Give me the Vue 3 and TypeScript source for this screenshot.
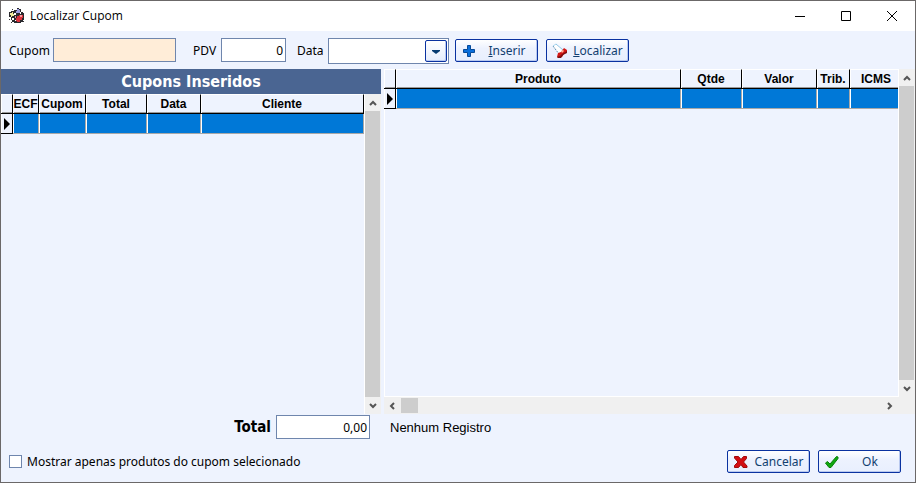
<script setup lang="ts">
import { ref } from 'vue'

interface Column {
  key: string
  label: string
}

const couponColumns: Column[] = [
  { key: 'ecf', label: 'ECF' },
  { key: 'cupom', label: 'Cupom' },
  { key: 'total', label: 'Total' },
  { key: 'data', label: 'Data' },
  { key: 'cliente', label: 'Cliente' },
]

const productColumns: Column[] = [
  { key: 'produto', label: 'Produto' },
  { key: 'qtde', label: 'Qtde' },
  { key: 'valor', label: 'Valor' },
  { key: 'trib', label: 'Trib.' },
  { key: 'icms', label: 'ICMS' },
]

const cupom = ref<string>('')
const pdv = ref<string>('0')
const date = ref<string>('')
const total = ref<string>('0,00')
const onlySelected = ref<boolean>(false)
</script>

<template>
  <div class="window">
    <header class="titlebar">
      <svg class="app-icon" viewBox="0 0 16 16" shape-rendering="crispEdges">
        <path d="M8 0h2v1h2v3h2v1h1v7h-1v2h-2v1H5v-1H3v-2H2V9H0V4h2V3h3V2h3z" fill="#2a2a2e" />
        <path d="M8 1h2v1h1v3H7V3h1z" fill="#9b9de0" />
        <path d="M1 5h2V4h1v2h1v2H3v1H2V7H1z" fill="#f1ec9b" />
        <path d="M5 5h2v2H5zM3 10h2v2H3zM11 4h1v2h-1zM6 12h1v1H6z" fill="#fff" />
        <path d="M8 8h2V7h4v3h-1v2h-2v2H8v-1H7v-3h1z" fill="#d9303b" />
        <path d="M11 7h2v2h-2zM6 8h1v2H6z" fill="#f59aa0" />
        <path d="M0 11h1v1H0zM2 14h1v1H2zM14 13h1v1h-1zM3 1h1v1H3z" fill="#333" />
      </svg>
      <h1>Localizar Cupom</h1>
      <div class="window-controls">
        <button type="button" aria-label="Minimizar">
          <svg viewBox="0 0 10 10"><path d="M0 5.5h10" /></svg>
        </button>
        <button type="button" aria-label="Maximizar">
          <svg viewBox="0 0 10 10"><path d="M.5.5h9v9h-9z" /></svg>
        </button>
        <button type="button" aria-label="Fechar">
          <svg viewBox="0 0 10 10"><path d="M0 0l10 10M10 0L0 10" /></svg>
        </button>
      </div>
    </header>

    <form class="toolbar" @submit.prevent>
      <label for="cupom">Cupom</label>
      <input id="cupom" v-model="cupom" class="field field-cupom" type="text" />
      <label for="pdv" class="label-pdv">PDV</label>
      <input id="pdv" v-model="pdv" class="field field-pdv" type="text" />
      <label for="data" class="label-data">Data</label>
      <div class="date-box">
        <input id="data" v-model="date" type="text" />
        <button type="button" class="date-open" aria-label="Abrir calendário">
          <svg viewBox="0 0 8 4"><path d="M0 0h8v1L4 4 0 1z" fill="#053a70" /></svg>
        </button>
      </div>
      <button type="button" class="action action-insert">
        <svg viewBox="0 0 16 16">
          <path d="M6.500 2.500h3v4h4v3h-4v4h-3v-4h-4v-3h4z" fill="#0a6fdc" stroke="#064a99" />
        </svg>
        <span><u>I</u>nserir</span>
      </button>
      <button type="button" class="action">
        <svg viewBox="0 0 16 16">
          <path d="M1 3l4-2 6 6-4 4z" fill="#fff" />
          <path d="M4 1l7 6" stroke="#8cc4e6" fill="none" />
          <path d="M1 3l6 8" stroke="#5b8fb0" fill="none" stroke-dasharray="2 1" />
          <path d="M1 3l3-2" stroke="#a9d6ee" fill="none" />
          <path d="M6 10l3-1 3-4 3 2v2l-3 2-2 3-3 1-2-1z" fill="#d31714" />
          <path d="M9 8l2-1 1 1-2 2z" fill="#ffb39a" />
          <path d="M15 8v2l-4 2-2 3H6l-1-1 3-1 2-2z" fill="#7d0f0f" />
        </svg>
        <span><u>L</u>ocalizar</span>
      </button>
    </form>

    <main class="panels">
      <section class="panel coupons">
        <h2>Cupons Inseridos</h2>
        <div class="grid">
          <div class="grid-body">
            <table>
              <colgroup>
                <col class="w-mark" />
                <col v-for="c in couponColumns" :key="c.key" :class="'w-' + c.key" />
              </colgroup>
              <thead>
                <tr>
                  <th></th>
                  <th v-for="c in couponColumns" :key="c.key" scope="col">{{ c.label }}</th>
                </tr>
              </thead>
              <tbody>
                <tr>
                  <td class="mark">
                    <svg viewBox="0 0 6 12"><path d="M0 0l6 6-6 6z" /></svg>
                  </td>
                  <td v-for="c in couponColumns" :key="c.key"></td>
                </tr>
              </tbody>
            </table>
          </div>
          <div class="scroll-v">
            <button type="button" aria-label="Rolar para cima">
              <svg viewBox="0 0 8 6"><path d="M1 5l3-3 3 3" /></svg>
            </button>
            <div class="thumb"></div>
            <button type="button" aria-label="Rolar para baixo">
              <svg viewBox="0 0 8 6"><path d="M1 1l3 3 3-3" /></svg>
            </button>
          </div>
        </div>
      </section>

      <section class="panel products">
        <div class="grid">
          <div class="grid-body framed">
            <table>
              <colgroup>
                <col class="w-mark" />
                <col v-for="c in productColumns" :key="c.key" :class="'w-' + c.key" />
              </colgroup>
              <thead>
                <tr>
                  <th></th>
                  <th v-for="c in productColumns" :key="c.key" scope="col">{{ c.label }}</th>
                </tr>
              </thead>
              <tbody>
                <tr>
                  <td class="mark">
                    <svg viewBox="0 0 6 12"><path d="M0 0l6 6-6 6z" /></svg>
                  </td>
                  <td v-for="c in productColumns" :key="c.key"></td>
                </tr>
              </tbody>
            </table>
          </div>
          <div class="scroll-v">
            <button type="button" aria-label="Rolar para cima">
              <svg viewBox="0 0 8 6"><path d="M1 5l3-3 3 3" /></svg>
            </button>
            <div class="thumb"></div>
            <button type="button" aria-label="Rolar para baixo">
              <svg viewBox="0 0 8 6"><path d="M1 1l3 3 3-3" /></svg>
            </button>
          </div>
        </div>
        <div class="scroll-h">
          <button type="button" aria-label="Rolar para a esquerda">
            <svg viewBox="0 0 6 8"><path d="M5 1L2 4l3 3" /></svg>
          </button>
          <div class="thumb"></div>
          <button type="button" class="scroll-end" aria-label="Rolar para a direita">
            <svg viewBox="0 0 6 8"><path d="M1 1l3 3-3 3" /></svg>
          </button>
        </div>
      </section>
    </main>

    <div class="summary">
      <div class="total">
        <label for="total">Total</label>
        <input id="total" v-model="total" class="field field-total" type="text" readonly />
      </div>
      <p>Nenhum Registro</p>
    </div>

    <footer class="footer">
      <label class="check">
        <input v-model="onlySelected" type="checkbox" />
        <span>Mostrar apenas produtos do cupom selecionado</span>
      </label>
      <div class="footer-actions">
        <button type="button" class="action">
          <svg viewBox="0 0 16 16">
            <path d="M1.500 2.500h4l2.500 3 2.500-3h3v2l-3 3.500 3.500 4v1.500h-4L8 10.500l-2.500 3h-4v-2L5 8 1.500 4z" fill="#d40d12" stroke="#a00a0a" />
          </svg>
          <span>Cancelar</span>
        </button>
        <button type="button" class="action">
          <svg viewBox="0 0 16 16">
            <path d="M1.500 9l2-1.500L6 10l6.500-7.500 1.500.5v1.500L7 13.500H5z" fill="#10a810" stroke="#088008" />
          </svg>
          <span>Ok</span>
        </button>
      </div>
    </footer>
  </div>
</template>

<style>
body {
  margin: 0;
}
</style>

<style scoped>
.window {
  box-sizing: border-box;
  min-height: 100vh;
  display: flex;
  flex-direction: column;
  border: 1px solid #6b6868;
  background: #eef3fe;
  color: #000;
  font: 12px/16px "Noto Sans", "Open Sans", sans-serif;
}

button,
input {
  box-sizing: border-box;
  margin: 0;
  padding: 0;
  border: 0;
  border-radius: 0;
  background: none;
  color: inherit;
  font: inherit;
  outline: none;
}

h1,
h2,
p {
  margin: 0;
}

svg {
  display: block;
  flex: none;
}

.titlebar {
  display: flex;
  align-items: center;
  height: 30px;
  padding-left: 8px;
  background: #fff;
}

.app-icon {
  width: 16px;
  height: 16px;
}

.titlebar h1 {
  flex: 1;
  padding-left: 5px;
  font: 12px/16px "Open Sans", "Noto Sans", sans-serif;
}

.window-controls {
  display: flex;
}

.window-controls button {
  display: flex;
  align-items: center;
  justify-content: center;
  width: 46px;
  height: 30px;
}

.window-controls svg {
  width: 10px;
  height: 10px;
  fill: none;
  stroke: #000;
}

.toolbar {
  display: flex;
  align-items: flex-start;
  height: 31px;
  padding: 7px 8px 0;
}

.toolbar > label {
  line-height: 26px;
}

.toolbar > label:first-child {
  width: 44px;
}

.field {
  height: 24px;
  padding: 0 2px;
  border: 1px solid #6f86ad;
  background: #fff;
}

.field-cupom {
  width: 123px;
  background: #ffedd8;
}

.label-pdv {
  width: 28px;
  padding-left: 17px;
}

.field-pdv {
  width: 65px;
  text-align: right;
}

.label-data {
  width: 31px;
  padding-left: 11px;
}

.date-box {
  display: flex;
  width: 121px;
  height: 26px;
  box-sizing: border-box;
  padding: 1px;
  border: 1px solid #6f86ad;
  background: #fff;
}

.date-box input {
  flex: 1;
  min-width: 0;
  padding: 0 3px;
}

.date-open {
  display: flex;
  align-items: center;
  justify-content: center;
  width: 22px;
  height: 22px;
  padding-top: 2px;
  border: 1px solid #0a32a0;
  border-radius: 2px;
  background: linear-gradient(#fff, #e4ecfc);
  box-shadow: inset -1px -1px #b9c9ef;
}

.date-open svg {
  width: 8px;
  height: 4px;
}

.action {
  display: flex;
  align-items: center;
  gap: 4px;
  width: 83px;
  height: 23px;
  padding: 0 4px 0 5px;
  border: 1px solid #0a32a0;
  border-radius: 2px;
  background: linear-gradient(#fff, #edf2fe 40%, #e8effe);
  box-shadow: inset -1px -1px #b9c9ef;
  color: #123f70;
}

.toolbar .action {
  margin: 1px 0 0 8px;
}

.toolbar .action-insert {
  margin-left: 6px;
}

.action svg {
  width: 16px;
  height: 16px;
}

.action span {
  flex: 1;
  text-align: center;
  white-space: nowrap;
}

.panels,
.summary {
  display: grid;
  grid-template-columns: minmax(0, 380fr) minmax(0, 531fr);
  column-gap: 3px;
}

.panels {
  flex: 1;
}

.panel {
  display: flex;
  flex-direction: column;
}

.coupons h2 {
  height: 25px;
  background: #4a6592;
  color: #fff;
  font: bold 16px/26px "DejaVu Sans Condensed", "DejaVu Sans", sans-serif;
  text-align: center;
}

.grid {
  flex: 1;
  display: flex;
}

.grid-body {
  flex: 1;
  min-width: 0;
}

.framed {
  border-right: 1px solid #fff;
  border-bottom: 1px solid #fff;
  box-shadow: inset 1px 0 #fff;
}

table {
  width: 100%;
  table-layout: fixed;
  border-collapse: separate;
  border-spacing: 0;
}

th {
  box-sizing: border-box;
  height: 20px;
  padding: 0;
  border-top: 1px solid #fff;
  border-right: 1px solid #000;
  border-bottom: 1px solid #000;
  box-shadow: inset 1px 0 #fff, inset 0 -1px #9a9a9a;
  font: bold 12px/17px "Liberation Sans", Arial, sans-serif;
  text-align: center;
  white-space: nowrap;
}

td {
  box-sizing: border-box;
  height: 20px;
  padding: 0;
  border-right: 1px solid #a8a8a8;
  border-bottom: 1px solid #a8a8a8;
  background: #0078d7;
  box-shadow: inset 1px 0 #fff;
}

.mark {
  padding-left: 3px;
  border-right: 1px solid #000;
  border-bottom: 1px solid #000;
  background: #eef3fe;
}

.framed th:last-child {
  padding-left: 4px;
}

.framed th:last-child,
.framed td:last-child {
  border-right: 0;
}

.mark svg {
  width: 6px;
  height: 12px;
}

.w-mark {
  width: 12px;
}

.w-ecf {
  width: 26px;
}

.w-cupom {
  width: 47px;
}

.w-total,
.w-qtde {
  width: 61px;
}

.w-data {
  width: 54px;
}

.w-valor {
  width: 75px;
}

.w-trib {
  width: 33px;
}

.w-icms {
  width: 48px;
}

.scroll-v {
  display: flex;
  flex-direction: column;
  width: 16px;
  background: #f0f0f0;
}

.coupons .scroll-v {
  border-left: 1px solid #fff;
}

.scroll-v button,
.scroll-h button {
  display: flex;
  align-items: center;
  justify-content: center;
  width: 16px;
  height: 17px;
}

.scroll-v svg {
  width: 8px;
  height: 6px;
}

.scroll-h svg {
  width: 6px;
  height: 8px;
}

.scroll-v path,
.scroll-h path {
  fill: none;
  stroke: #555;
  stroke-width: 2;
}

.scroll-v .thumb {
  flex: 1;
  margin-right: 1px;
  background: #cdcdcd;
}

.scroll-h {
  display: flex;
  height: 17px;
  background: #f0f0f0;
}

.scroll-h .thumb {
  width: 17px;
  height: 15px;
  margin: 1px;
  background: #cdcdcd;
}

.scroll-h .scroll-end {
  margin-right: 17px;
  margin-left: auto;
}

.summary {
  padding-top: 1px;
}

.total {
  display: flex;
  justify-content: flex-end;
  gap: 5px;
  padding-right: 11px;
}

.total label {
  font: bold 15px/25px "DejaVu Sans Condensed", "DejaVu Sans", sans-serif;
}

.field-total {
  width: 94px;
  text-align: right;
}

.summary p {
  padding-left: 6px;
  font: 13px/25px "Liberation Sans", Arial, sans-serif;
}

.footer {
  display: flex;
  align-items: center;
  justify-content: space-between;
  padding: 10px 14px 9px 8px;
}

.check {
  display: flex;
  align-items: center;
  gap: 5px;
}

.check input {
  appearance: none;
  width: 13px;
  height: 13px;
  border: 1px solid #6f86ad;
  background: #fff;
}

.check input:checked {
  background: #0a66cf;
}

.footer-actions {
  display: flex;
  gap: 8px;
}
</style>
